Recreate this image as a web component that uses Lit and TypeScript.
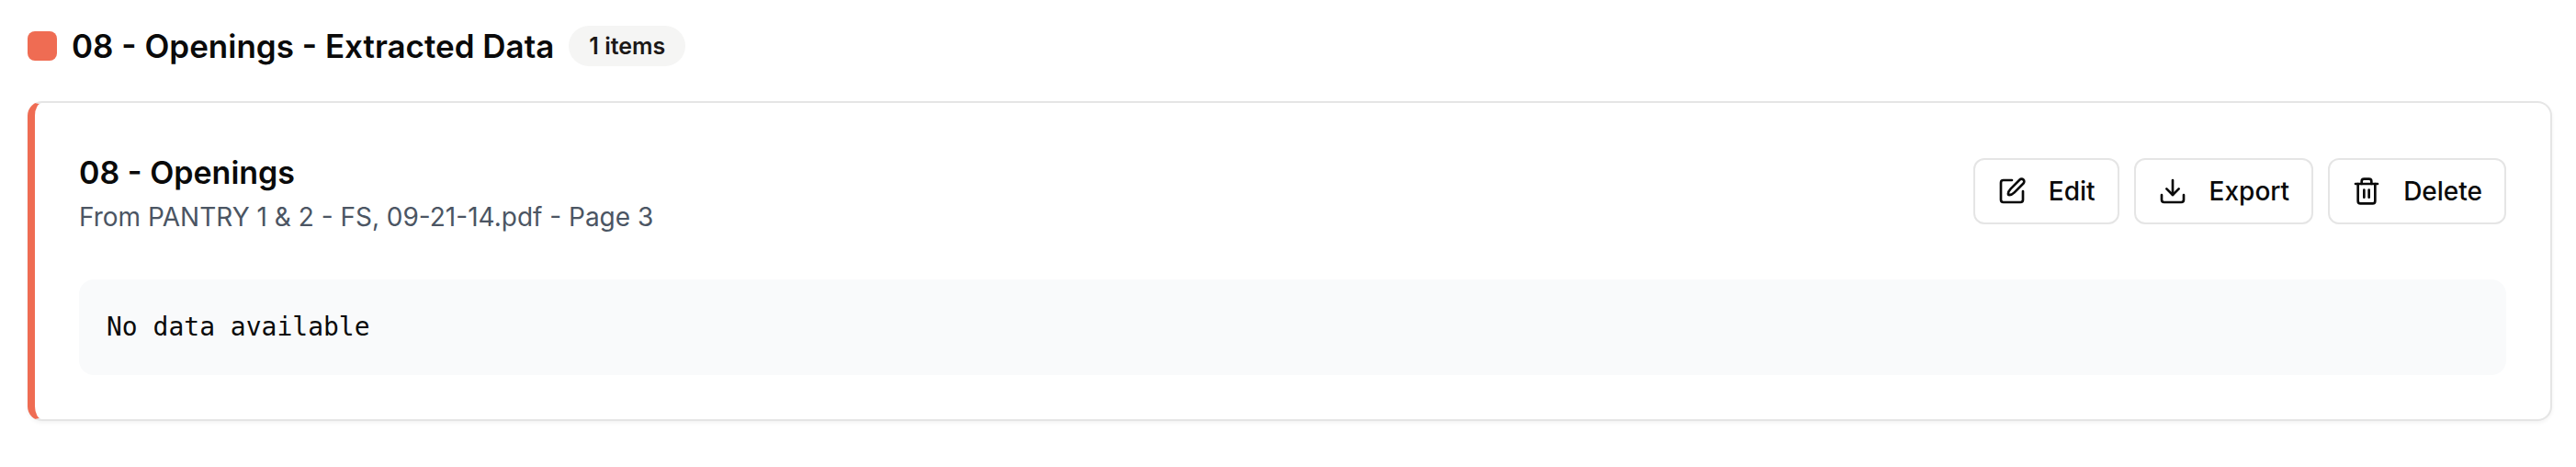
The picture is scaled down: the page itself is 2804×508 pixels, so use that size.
import { LitElement, html, css, svg } from "lit";
import { customElement, property } from "lit/decorators.js";

const icons = {
  edit: svg`<path d="M12 3H5a2 2 0 0 0-2 2v14a2 2 0 0 0 2 2h14a2 2 0 0 0 2-2v-7"/><path d="M18.375 2.625a2.1 2.1 0 0 1 3 3L14 13c-1.2 1.2-2.6 2-4.3 2.1a.8.8 0 0 1-.8-.8C9 12.600 9.800 11.200 11 10z"/>`,
  download: svg`<path d="M21 15v4a2 2 0 0 1-2 2H5a2 2 0 0 1-2-2v-4"/><path d="m7 10 5 5 5-5"/><path d="M12 15V3"/>`,
  trash: svg`<path d="M3 6h18"/><path d="M19 6v14a2 2 0 0 1-2 2H7a2 2 0 0 1-2-2V6"/><path d="M8 6V4a2 2 0 0 1 2-2h4a2 2 0 0 1 2 2v2"/><path d="M10 11v6"/><path d="M14 11v6"/>`,
};

@customElement("action-button")
class ActionButton extends LitElement {
  @property() icon: keyof typeof icons = "edit";
  @property() label = "";

  static styles = css`
    :host { display: block; }
    .button {
      display: flex;
      align-items: center;
      gap: 24px;
      height: 72px;
      box-sizing: border-box;
      padding: 0 24px;
      border: 2px solid #e5e5e5;
      border-radius: 12px;
      background: #fff;
      color: #0a0a0a;
      font: 500 28px/40px Inter, sans-serif;
      white-space: nowrap;
      cursor: pointer;
    }
    .button:hover { background: #f5f5f4; }
    .icon {
      width: 32px;
      height: 32px;
      fill: none;
      stroke: currentColor;
      stroke-width: 2;
      stroke-linecap: round;
      stroke-linejoin: round;
    }
  `;

  render() {
    return html`<button class="button" type="button">
      <svg class="icon" viewBox="0 0 24 24" aria-hidden="true">${icons[this.icon]}</svg>${this.label}
    </button>`;
  }
}

@customElement("app-root")
class AppRoot extends LitElement {
  static styles = css`
    :host {
      display: block;
      padding: 28px 26px 50px 30px;
      background: #fff;
      color: #0a0a0a;
      font-family: Inter, sans-serif;
    }
    .header {
      display: flex;
      align-items: center;
      gap: 16px;
      margin-bottom: 38px;
    }
    .swatch {
      width: 32px;
      height: 32px;
      border-radius: 8px;
      background: #ef6c53;
    }
    .title {
      margin: 0;
      font-size: 35px;
      line-height: 44px;
      font-weight: 600;
    }
    .badge {
      padding: 6px 22px;
      border-radius: 22px;
      background: #f5f5f4;
      color: #1c1917;
      font-size: 25px;
      line-height: 32px;
      font-weight: 600;
    }
    .card {
      padding: 48px;
      border: 2px solid #e5e5e5;
      border-left: 8px solid #ef6c53;
      border-radius: 16px;
      background: #fff;
      box-shadow: 0 2px 4px rgba(0, 0, 0, 0.05);
    }
    .top {
      display: flex;
      align-items: center;
      justify-content: space-between;
      gap: 32px;
      margin-bottom: 48px;
    }
    .card-title {
      margin: 0;
      font-size: 34px;
      line-height: 56px;
      font-weight: 600;
    }
    .source {
      margin: 0;
      color: #4b5563;
      font-size: 28px;
      line-height: 40px;
    }
    .actions {
      display: flex;
      gap: 16px;
    }
    .data {
      margin: 0;
      padding: 32px 30px;
      border-radius: 16px;
      background: #f9fafb;
      font: 28px/40px "DejaVu Sans Mono", monospace;
    }
  `;

  render() {
    return html`
      <header class="header">
        <span class="swatch"></span>
        <h2 class="title">08 - Openings - Extracted Data</h2>
        <span class="badge">1 items</span>
      </header>
      <article class="card">
        <div class="top">
          <div>
            <h3 class="card-title">08 - Openings</h3>
            <p class="source">From PANTRY 1 &amp; 2 - FS, 09-21-14.pdf - Page 3</p>
          </div>
          <div class="actions">
            <action-button icon="edit" label="Edit"></action-button>
            <action-button icon="download" label="Export"></action-button>
            <action-button icon="trash" label="Delete"></action-button>
          </div>
        </div>
        <pre class="data">No data available</pre>
      </article>
    `;
  }
}
